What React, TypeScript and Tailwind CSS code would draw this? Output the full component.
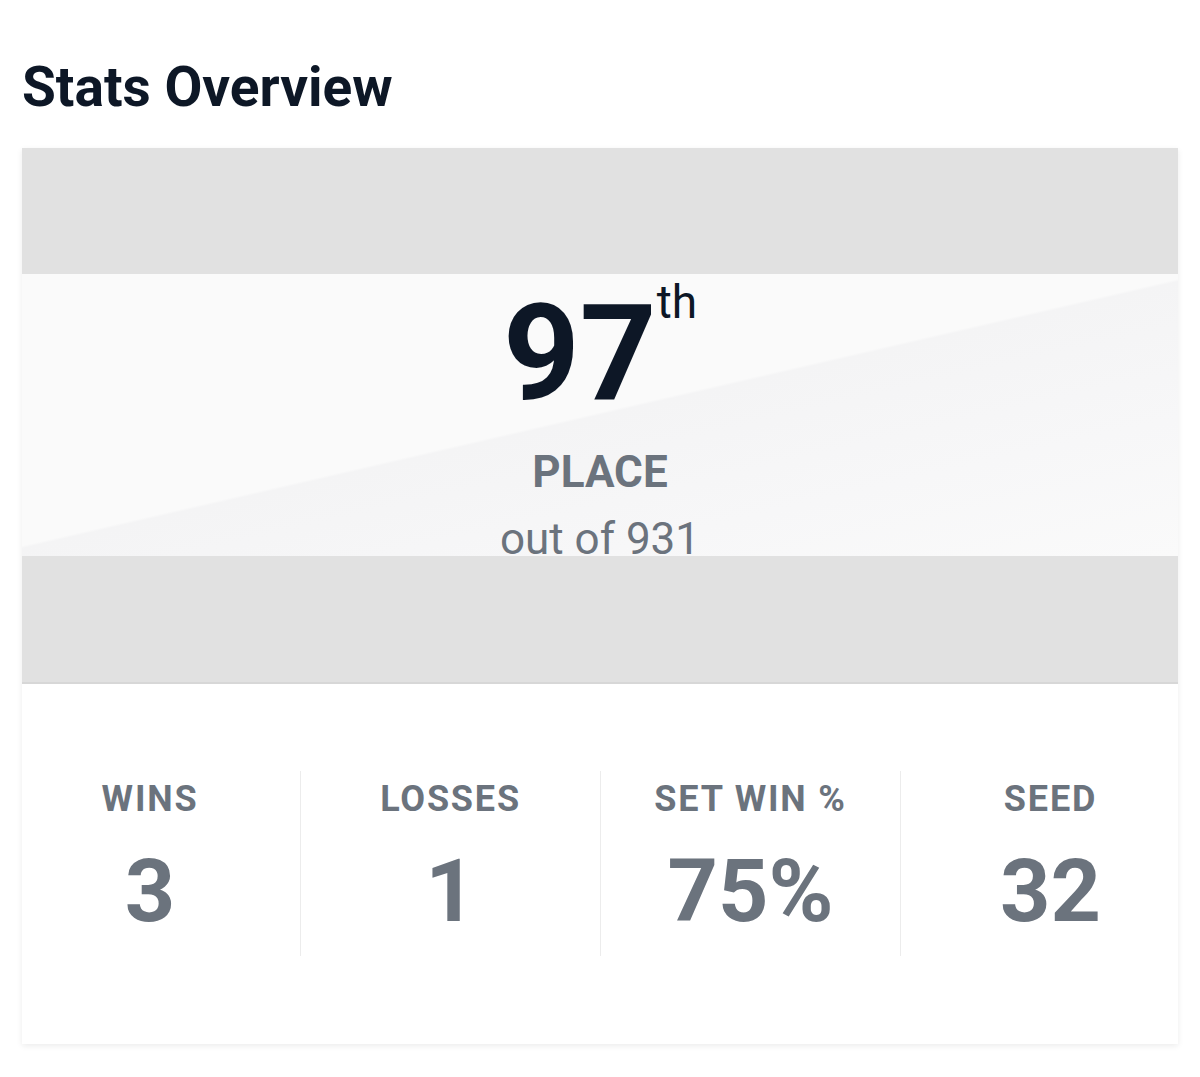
import React from "react";

const stats = [
  { label: "WINS", value: "3" },
  { label: "LOSSES", value: "1" },
  { label: "SET WIN %", value: "75%" },
  { label: "SEED", value: "32" },
];

export default function App() {
  return (
    <div className="min-h-[1077px] bg-white px-[22px] font-[Roboto,sans-serif]">
      {/* Heading */}
      <h2 className="pt-[60px] text-[55px] font-bold leading-none text-[#0d1726]">
        Stats Overview
      </h2>

      {/* Card */}
      <div className="mt-[33px] bg-white shadow-[0_2px_6px_rgba(0,0,0,0.08)]">
        <div className="h-[126px] bg-[#e1e1e1]" />

        <div className="flex h-[282px] flex-col items-center bg-[linear-gradient(167deg,#fafafa_49.5%,#f4f4f5_50%,#f7f7f8_75%,#fafafa_100%)] pt-[13px]">
          <div className="flex items-start justify-center">
            <span className="text-[134px] font-bold leading-none text-[#0d1726]">97</span>
            <span className="mt-[-8px] text-[46px] leading-none text-[#0d1726]">th</span>
          </div>
          <div className="mt-[29px] text-[44px] font-bold leading-none text-[#6b737d]">PLACE</div>
          <div className="mt-[26px] text-[44px] leading-[38px] text-[#6b737d]">out of 931</div>
        </div>

        <div className="h-[128px] border-b-2 border-[#d7d7d7] bg-[#e1e1e1]" />

        {/* Stats row */}
        <div className="h-[360px] pt-[87px]">
          <div className="mx-[-22px] grid h-[185px] grid-cols-4">
            {stats.map((s, i) => (
              <div
                key={s.label}
                className={
                  i === 0
                    ? "flex flex-col items-center pt-[10px]"
                    : "flex flex-col items-center border-l border-[#ececec] pt-[10px]"
                }
              >
                <div className="text-[36px] font-bold leading-none tracking-[1.8px] text-[#6b737d]">
                  {s.label}
                </div>
                <div className="mt-[30px] text-[88px] font-bold leading-none text-[#6b737d]">{s.value}</div>
              </div>
            ))}
          </div>
        </div>
      </div>
    </div>
  );
}
